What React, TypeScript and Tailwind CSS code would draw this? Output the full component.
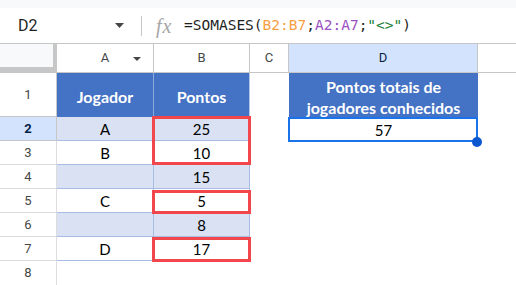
import React from "react";

type Cell = { a: string; b: string; band: boolean };
const data: Cell[] = [
  { a: "A", b: "25", band: true },
  { a: "B", b: "10", band: false },
  { a: "", b: "15", band: true },
  { a: "C", b: "5", band: false },
  { a: "", b: "8", band: true },
  { a: "D", b: "17", band: false },
];

export default function App() {
  return (
    <div className="relative w-[516px] h-[285px] overflow-hidden bg-white font-['Roboto',sans-serif]">
      {/* top strip */}
      <div className="h-[8px] bg-[#f8f9fa]" />
      {/* formula bar */}
      <div className="h-[36px] border-b border-[#c4c7c5] flex items-center">
        <div className="w-[141px] flex items-center pl-[18px] pr-[17px] h-full">
          <span className="text-[16px] text-[#1f1f1f] leading-none">D2</span>
          <span className="flex-1" />
          <svg width="9" height="5" viewBox="0 0 9 5">
            <path d="M0 0 L9 0 L4.5 5 Z" fill="#444746" />
          </svg>
        </div>
        <div className="w-px h-[20px] bg-[#c4c7c5]" />
        <span className="ml-[14px] w-[28px] text-[20px] leading-none italic text-[#a6a6a6] font-['Liberation_Serif',serif] tracking-[1px]">
          fx
        </span>
        <span className="text-[14.5px] leading-none font-['DejaVu_Sans_Mono',monospace] text-[#1f1f1f] whitespace-pre">
          =SOMASES(
          <span className="text-[#f6a045]">B2:B7</span>;
          <span className="text-[#9a4fc2]">A2:A7</span>;
          <span className="text-[#188038]">"&lt;&gt;"</span>)
        </span>
      </div>

      {/* grid */}
      <div className="grid grid-cols-[57px_97px_96px_39px_189px_1fr] grid-rows-[29px_44px_repeat(7,24px)]">
        {/* header row */}
        <div className="bg-[#f8f9fa] border-r-4 border-b-[6px] border-[#c7c7c7]" />
        <div className="relative flex items-center justify-center border-r border-b border-[#c4c7c5] text-[13px] text-[#444746]">
          A
          <svg className="absolute left-[76px] top-[13px]" width="8" height="4" viewBox="0 0 8 4">
            <path d="M0 0 L8 0 L4 4 Z" fill="#444746" />
          </svg>
        </div>
        <div className="flex items-center justify-center border-r border-b border-[#c4c7c5] text-[13px] text-[#444746]">B</div>
        <div className="flex items-center justify-center border-r border-b border-[#c4c7c5] text-[13px] text-[#444746]">C</div>
        <div className="flex items-center justify-center border-r border-b border-[#c4c7c5] bg-[#d3e3fd] text-[13px] text-[#0b1f44]">D</div>
        <div className="border-b border-[#c4c7c5]" />

        {/* row 1 */}
        <div className="flex items-center justify-center border-r border-b border-[#c4c7c5] text-[13px] text-[#444746]">1</div>
        <div className="flex items-center justify-center pt-[3px] bg-[#4472c4] border-r border-[#8eaadb] text-white font-['Lato',sans-serif] font-bold text-[16px]">
          Jogador
        </div>
        <div className="flex items-center justify-center pt-[3px] bg-[#4472c4] border-r border-[#b4c6e7] text-white font-['Lato',sans-serif] font-bold text-[16px]">
          Pontos
        </div>
        <div />
        <div className="flex flex-col items-center justify-center pt-[3px] bg-[#4472c4] text-white font-['Lato',sans-serif] font-bold text-[16px] leading-[21px]">
          <span>Pontos totais de</span>
          <span>jogadores conhecidos</span>
        </div>
        <div />

        {/* rows 2-7 */}
        {data.map((r, i) => {
          const n = i + 2;
          const sel = n === 2;
          return (
            <React.Fragment key={n}>
              <div
                className={
                  sel
                    ? "flex items-center justify-center border-r border-b border-[#c4c7c5] bg-[#d3e3fd] text-[13px] font-bold text-[#041e49]"
                    : "flex items-center justify-center border-r border-b border-[#dadce0] text-[13px] text-[#444746]"
                }
              >
                {n}
              </div>
              <div
                className={
                  (r.band ? "bg-[#d9e1f2] " : "bg-white ") +
                  "flex items-center justify-center pt-[2px] border-r border-b border-[#a7bde4] font-['Lato',sans-serif] text-[15px] text-black"
                }
              >
                {r.a}
              </div>
              <div
                className={
                  (r.band ? "bg-[#d9e1f2] " : "bg-white ") +
                  "flex items-center justify-center pt-[2px] border-r border-b border-[#a7bde4] font-['Lato',sans-serif] text-[15px] text-black"
                }
              >
                {r.b}
              </div>
              <div />
              <div className="flex items-center justify-center pt-[2px] font-['Lato',sans-serif] text-[15px] text-black">
                {sel ? "57" : ""}
              </div>
              <div />
            </React.Fragment>
          );
        })}

        {/* row 8 */}
        <div className="flex items-center justify-center border-r border-[#dadce0] text-[13px] text-[#444746]">8</div>
        <div />
        <div />
        <div />
        <div />
        <div />
      </div>

      {/* red boxes */}
      <div className="absolute left-[152px] top-[116px] w-[99px] h-[49px] border-[3px] border-[#f0464c]" />
      <div className="absolute left-[152px] top-[190px] w-[99px] h-[24px] border-[3px] border-[#f0464c]" />
      <div className="absolute left-[152px] top-[237px] w-[99px] h-[25px] border-[3px] border-[#f0464c]" />

      {/* selection */}
      <div className="absolute left-[288px] top-[117px] w-[190px] h-[25px] border-2 border-[#1a73e8]" />
      <div className="absolute left-[472px] top-[137px] w-[10px] h-[10px] rounded-full bg-[#0b57d0]" />
    </div>
  );
}
